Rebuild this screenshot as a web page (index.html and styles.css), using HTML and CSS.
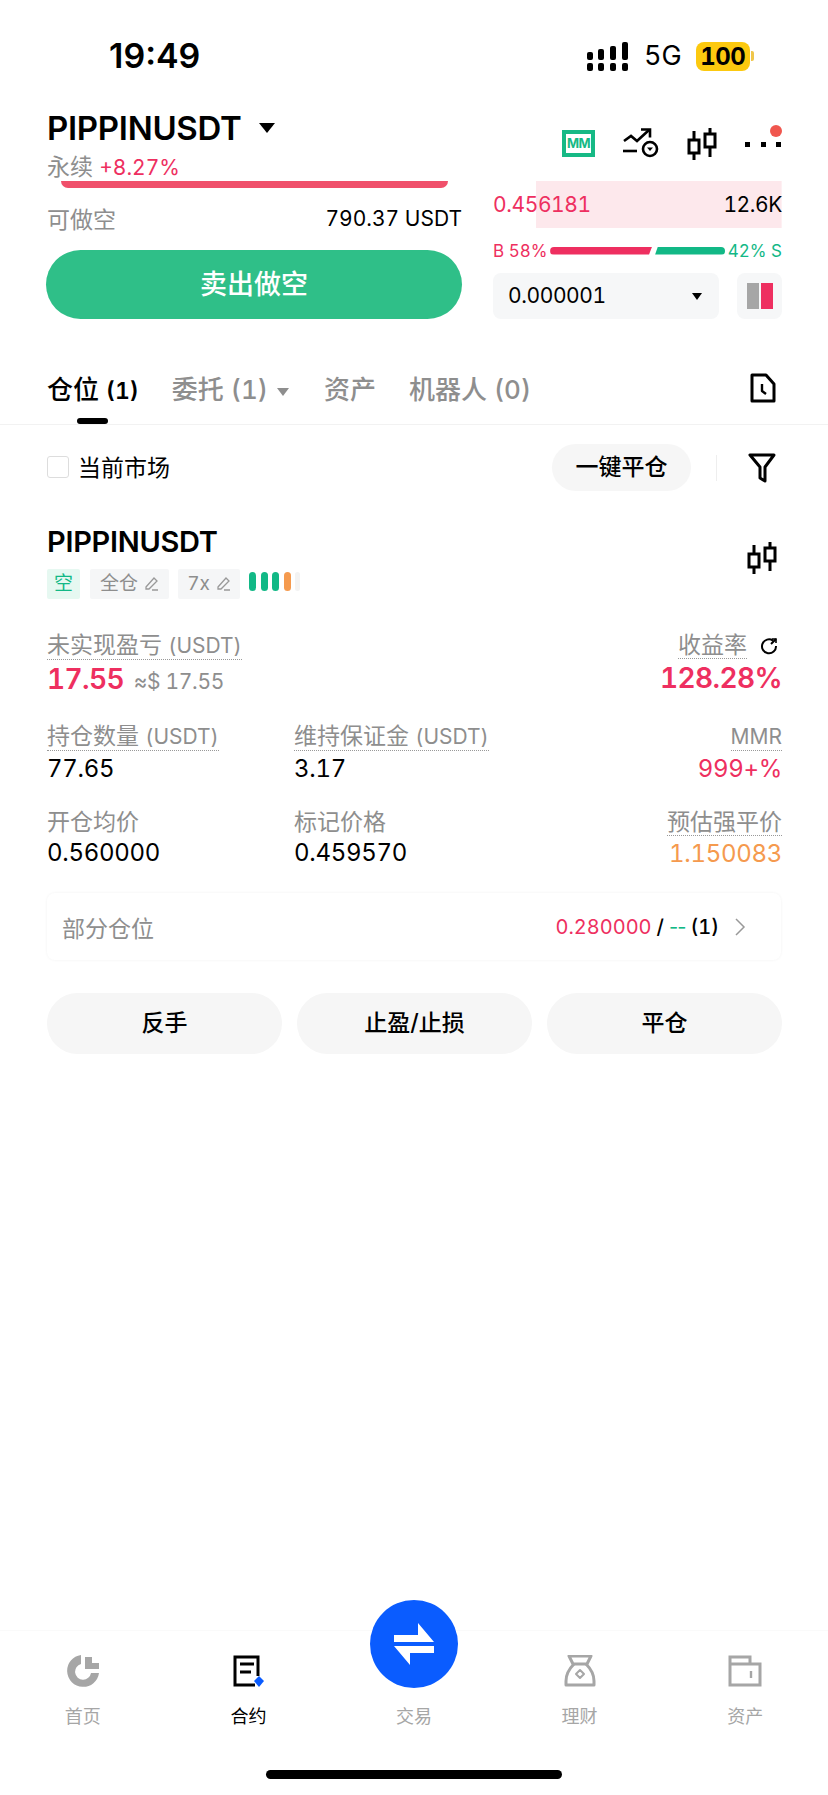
FILE: index.html
```html
<!DOCTYPE html>
<html lang="zh-CN">
<head>
    <meta charset="UTF-8">
    <meta name="viewport" content="width=device-width, initial-scale=1.0">
    <title>PIPPINUSDT 合约</title>
    <link rel="stylesheet" href="styles.css">
</head>
<body>
    <div class="page">
        <!-- Barra de estado -->
        <div class="status-bar">
            <span class="time">19:49</span>
            <div class="status-right">
                <svg class="signal" width="42" height="29" viewBox="0 0 42 29" fill="#000">
                    <rect x="0" y="10" width="6" height="8" rx="2"/><rect x="0" y="21" width="6" height="8" rx="2"/>
                    <rect x="11" y="7" width="6" height="11" rx="2"/><rect x="11" y="21" width="6" height="8" rx="2"/>
                    <rect x="23" y="4" width="6" height="14" rx="2"/><rect x="23" y="21" width="6" height="8" rx="2"/>
                    <rect x="35" y="0" width="6" height="18" rx="2"/><rect x="35" y="21" width="6" height="8" rx="2"/>
                </svg>
                <span class="net">5G</span>
                <span class="battery">100</span>
                <span class="battery-tip"></span>
            </div>
        </div>

        <!-- Cabecera del mercado -->
        <div class="market-head">
            <div>
                <div class="symbol">PIPPINUSDT <span class="caret"></span></div>
                <div class="symbol-sub">永续 <span class="red">+8.27%</span></div>
            </div>
            <div class="head-icons">
                <span class="mm-icon">MM</span>
                <svg width="36" height="30" viewBox="0 0 36 30" fill="none" stroke="#000" stroke-width="2.6">
                    <path d="M1 13l7-5 6 5L26 2"/><path d="M18 1.500h9v8"/><path d="M0 23h14"/>
                    <circle cx="27" cy="21" r="7"/><path d="M24 19.500h6L27 23z" fill="#000" stroke="none"/>
                </svg>
                <svg class="candle" width="30" height="32" viewBox="0 0 30 32" fill="none" stroke="#000" stroke-width="3">
                    <rect x="2" y="12" width="10" height="13"/><path d="M7 3v9M7 25v7"/>
                    <rect x="18" y="6" width="10" height="13"/><path d="M23 0v6M23 19v10"/>
                </svg>
                <div class="more">
                    <span></span><span></span><span></span>
                    <i class="more-dot"></i>
                </div>
            </div>
        </div>

        <!-- Orden y libro -->
        <div class="order-row">
            <div class="order-left">
                <div class="red-strip"></div>
                <div class="avail">
                    <span class="grey avail-label">可做空</span>
                    <span>790.37 USDT</span>
                </div>
                <div class="sell-btn">卖出做空</div>
            </div>
            <div class="order-right">
                <div class="book-row">
                    <span class="red">0.456181</span>
                    <span>12.6K</span>
                </div>
                <div class="ratio">
                    <span class="red">B 58%</span>
                    <div class="ratio-bar">
                        <div class="ratio-buy"></div>
                        <div class="ratio-sell"></div>
                    </div>
                    <span class="green">42% S</span>
                </div>
                <div class="book-tools">
                    <div class="tick-select">0.000001 <span class="caret small"></span></div>
                    <div class="layout-btn"><span class="lay-grey"></span><span class="lay-red"></span></div>
                </div>
            </div>
        </div>

        <!-- Pestañas -->
        <div class="tabs">
            <div class="tab active">仓位 <b>(1)</b><i class="tab-line"></i></div>
            <div class="tab tab-orders">委托 (1) <span class="caret tiny"></span></div>
            <div class="tab tab-assets">资产</div>
            <div class="tab tab-bots">机器人 (0)</div>
            <svg class="tab-file" width="26" height="30" viewBox="0 0 26 30" fill="none" stroke="#000" stroke-width="3" stroke-linejoin="round">
                <path d="M2 2h14l8 9v17H2z"/><path d="M12 11v7l4 3" stroke-width="2.4"/>
            </svg>
        </div>

        <div class="filter-row">
            <span class="checkbox"></span>
            <span class="filter-label">当前市场</span>
            <span class="close-all">一键平仓</span>
            <span class="filter-sep"></span>
            <svg width="28" height="30" viewBox="0 0 28 30" fill="none" stroke="#000" stroke-width="3" stroke-linejoin="round">
                <path d="M2 2h24L17 14v14l-5-3V14z"/>
            </svg>
        </div>

        <!-- Posición -->
        <div class="position">
            <div class="pos-head">
                <div>
                    <div class="pos-symbol">PIPPINUSDT</div>
                    <div class="pos-tags">
                        <span class="tag tag-short">空</span>
                        <span class="tag tag-mid">全仓
                            <svg width="16" height="16" viewBox="0 0 16 16" fill="none" stroke="#999" stroke-width="1.3"><path d="M3 11L11 2l3 3-8 8H3zM9 14h6"/></svg>
                        </span>
                        <span class="tag tag-lev">7x
                            <svg width="16" height="16" viewBox="0 0 16 16" fill="none" stroke="#999" stroke-width="1.3"><path d="M3 11L11 2l3 3-8 8H3zM9 14h6"/></svg>
                        </span>
                        <span class="risk"><i></i><i></i><i></i><i class="risk-o"></i><i class="risk-off"></i></span>
                    </div>
                </div>
                <svg class="candle" width="30" height="32" viewBox="0 0 30 32" fill="none" stroke="#000" stroke-width="3">
                    <rect x="2" y="12" width="10" height="13"/><path d="M7 3v9M7 25v7"/>
                    <rect x="18" y="6" width="10" height="13"/><path d="M23 0v6M23 19v10"/>
                </svg>
            </div>

            <div class="pnl-row">
                <div>
                    <span class="label dotted">未实现盈亏 <small>(USDT)</small></span>
                    <div class="pnl-val"><b class="red pnl-main">17.55</b> <span class="approx">≈$ 17.55</span></div>
                </div>
                <div class="right">
                    <span class="label-wrap">
                        <span class="label dotted">收益率</span>
                        <svg width="18" height="18" viewBox="0 0 18 18" fill="none" stroke="#000" stroke-width="2"><path d="M13 3.600A7 7 0 1 0 16 9"/><path d="M11 7l5-5"/><path d="M12 2h4v4" stroke-width="1.6"/></svg>
                    </span>
                    <div class="pnl-val"><b class="red">128.28%</b></div>
                </div>
            </div>

            <div class="data-grid">
                <div>
                    <span class="label dotted">持仓数量 <small>(USDT)</small></span>
                    <div class="val">77.65</div>
                </div>
                <div>
                    <span class="label dotted">维持保证金 <small>(USDT)</small></span>
                    <div class="val">3.17</div>
                </div>
                <div class="right">
                    <span class="label dotted"><small>MMR</small></span>
                    <div class="val red">999+%</div>
                </div>
                <div>
                    <span class="label">开仓均价</span>
                    <div class="val">0.560000</div>
                </div>
                <div>
                    <span class="label">标记价格</span>
                    <div class="val">0.459570</div>
                </div>
                <div class="right">
                    <span class="label dotted">预估强平价</span>
                    <div class="val orange">1.150083</div>
                </div>
            </div>

            <div class="partial">
                <span class="grey">部分仓位</span>
                <span class="partial-right">
                    <span class="red">0.280000</span> <b>/</b> <span class="green dash">--</span> <b>(1)</b>
                    <svg width="12" height="20" viewBox="0 0 12 20" fill="none" stroke="#999" stroke-width="1.5"><path d="M2 2l8 8-8 8"/></svg>
                </span>
            </div>

            <div class="pos-actions">
                <div class="pos-btn">反手</div>
                <div class="pos-btn">止盈/止损</div>
                <div class="pos-btn">平仓</div>
            </div>
        </div>

        <!-- Navegación inferior -->
        <div class="bottom-nav">
            <div class="trade-fab">
                <svg width="44" height="44" viewBox="0 0 44 44" fill="#fff">
                    <path d="M26 1l16 19H2v-7h24z"/><path d="M18 43L2 24h40v7H18z"/>
                </svg>
            </div>
            <div class="nav-item">
                <svg width="34" height="32" viewBox="0 0 34 32" fill="#a6a6a6">
                    <path d="M15 0v9a8 8 0 1 0 10 9h8A16 16 0 1 1 15 0z"/><path d="M19 2h7v6h7v6H19z"/>
                </svg>
                <span>首页</span>
            </div>
            <div class="nav-item nav-on">
                <svg width="34" height="32" viewBox="0 0 34 32" fill="none">
                    <path d="M27 21V2H4v28h20" stroke="#000" stroke-width="3"/>
                    <path d="M9 9h14M9 17h11" stroke="#000" stroke-width="3"/>
                    <path d="M28 21l5 5-5 6-5-6z" fill="#0a5cff"/>
                </svg>
                <span>合约</span>
            </div>
            <div class="nav-item">
                <div class="nav-spacer"></div>
                <span>交易</span>
            </div>
            <div class="nav-item">
                <svg width="34" height="32" viewBox="0 0 34 32" fill="none" stroke="#a6a6a6" stroke-width="3" stroke-linejoin="round">
                    <path d="M6 1h22l-4 8H10z"/><path d="M11 9C6 14 3 19 3 26v4h28v-4c0-7-3-12-8-17"/>
                    <path d="M17 15l4 4-4 4-4-4z" stroke-width="2"/>
                </svg>
                <span>理财</span>
            </div>
            <div class="nav-item">
                <svg width="34" height="32" viewBox="0 0 34 32" fill="none" stroke="#a6a6a6" stroke-width="3">
                    <path d="M2 30V2h20v7h10v21zM2 9h20"/><path d="M23 16v7" stroke-width="2.4"/>
                </svg>
                <span>资产</span>
            </div>
        </div>

        <div class="home-bar"></div>
    </div>
</body>
</html>
```

FILE: styles.css
```css
* {
    box-sizing: border-box;
}

body {
    margin: 0;
    padding: 0;
    background-color: #fff;
    font-family: Inter, "Noto Sans CJK SC", sans-serif;
    font-variant-numeric: tabular-nums;
    color: #000;
}

.page {
    width: 828px;
    height: 1795px;
    display: flex;
    flex-direction: column;
    overflow: hidden;
}

.red { color: #ee2f60; }
.green { color: #12b886; }
.grey { color: #8e8e8e; }
.orange { color: #f59a4e; }

.caret {
    display: inline-block;
    width: 0;
    height: 0;
    border-left: 8px solid transparent;
    border-right: 8px solid transparent;
    border-top: 10px solid #000;
}

.caret.small {
    border-left-width: 5px;
    border-right-width: 5px;
    border-top-width: 7px;
}

.caret.tiny {
    border-left-width: 6px;
    border-right-width: 6px;
    border-top-width: 8px;
    border-top-color: #8e8e8e;
    margin: 0 0 3px 2px;
}

/* status bar */
.status-bar {
    height: 108px;
    padding: 36px 0 0 109px;
    display: flex;
    justify-content: space-between;
    align-items: flex-start;
}

.time {
    font-size: 34px;
    font-weight: 600;
    line-height: 40px;
    font-variant-numeric: normal;
}

.status-right {
    display: flex;
    align-items: center;
    width: 170px;
    margin-right: 71px;
    height: 40px;
}

.signal {
    margin-right: 15px;
}

.net {
    font-size: 27px;
    line-height: 30px;
    margin-right: 14px;
}

.battery {
    background-color: #fcc90f;
    border-radius: 8px;
    font-size: 24px;
    font-weight: 700;
    line-height: 29px;
    padding: 0 4px;
    width: 54px;
    text-align: center;
    letter-spacing: -0.5px;
}

.battery-tip {
    width: 3px;
    height: 10px;
    background-color: #f0c64a;
    border-radius: 0 2px 2px 0;
    margin-left: 1px;
}

/* market head */
.market-head {
    height: 73px;
    padding: 0 47px;
    display: flex;
    justify-content: space-between;
}

.symbol {
    font-size: 33px;
    font-weight: 600;
    line-height: 40px;
    letter-spacing: -0.3px;
}

.symbol .caret {
    margin: 0 0 7px 9px;
}

.symbol-sub {
    font-size: 23px;
    line-height: 30px;
    color: #8e8e8e;
    margin-top: 4px;
}

.symbol-sub .red {
    font-size: 21px;
}

.head-icons {
    display: flex;
    align-items: flex-start;
    gap: 28px;
    padding-top: 20px;
}

.mm-icon {
    width: 33px;
    height: 27px;
    border: 4px solid #16b985;
    color: #16b985;
    font-size: 13px;
    font-weight: 700;
    line-height: 19px;
    text-align: center;
    margin-top: 2px;
    letter-spacing: -0.5px;
}

.more {
    position: relative;
    width: 36px;
    display: flex;
    justify-content: space-between;
    padding-top: 14px;
}

.more span {
    width: 5px;
    height: 5px;
    background-color: #000;
}

.more-dot {
    position: absolute;
    right: -1px;
    top: -3px;
    width: 12px;
    height: 12px;
    border-radius: 50%;
    background-color: #f0564e;
}

/* order row */
.order-row {
    height: 138px;
    padding: 0 46px 0 47px;
    display: flex;
    justify-content: space-between;
}

.order-left {
    width: 415px;
}

.red-strip {
    width: 387px;
    height: 7px;
    margin-left: 14px;
    background-color: #f0506b;
    border-radius: 0 0 14px 14px;
}

.avail {
    display: flex;
    justify-content: space-between;
    align-items: center;
    height: 60px;
    font-size: 21px;
}

.avail-label {
    font-size: 23px;
}

.sell-btn {
    height: 69px;
    margin-top: 2px;
    margin-left: -1px;
    border-radius: 35px;
    background-color: #2fbf88;
    color: #fff;
    font-size: 27px;
    font-weight: 500;
    line-height: 69px;
    text-align: center;
}

.order-right {
    width: 289px;
}

.book-row {
    height: 47px;
    display: flex;
    justify-content: space-between;
    align-items: center;
    font-size: 21px;
    letter-spacing: -0.4px;
    background: linear-gradient(#fde8ec, #fde8ec) no-repeat right / 85% 100%;
}

.ratio {
    display: flex;
    align-items: center;
    justify-content: space-between;
    height: 45px;
    font-size: 17px;
}

.ratio-bar {
    display: flex;
    width: 175px;
    gap: 3px;
}

.ratio-buy {
    width: 102px;
    height: 8px;
    background-color: #ee2f60;
    border-radius: 4px 0 0 4px;
    clip-path: polygon(0 0, 100% 0, 97% 100%, 0 100%);
}

.ratio-sell {
    width: 70px;
    height: 8px;
    background-color: #12b886;
    border-radius: 0 4px 4px 0;
    clip-path: polygon(4% 0, 100% 0, 100% 100%, 0 100%);
}

.book-tools {
    display: flex;
    justify-content: space-between;
}

.tick-select {
    width: 226px;
    height: 46px;
    border-radius: 8px;
    background-color: #f6f7f8;
    font-size: 21px;
    line-height: 46px;
    padding: 0 17px 0 15px;
    display: flex;
    justify-content: space-between;
    align-items: center;
    letter-spacing: -0.4px;
}

.layout-btn {
    width: 45px;
    height: 46px;
    border-radius: 8px;
    background-color: #f6f7f8;
    display: flex;
    justify-content: center;
    align-items: center;
    gap: 2px;
}

.lay-grey, .lay-red {
    width: 12px;
    height: 26px;
}

.lay-grey { background-color: #a6a6a6; }
.lay-red { background-color: #ee2f60; }

/* tabs */
.tabs {
    position: relative;
    height: 106px;
    padding: 0 47px;
    border-bottom: 1px solid #f2f2f2;
    display: flex;
    align-items: flex-end;
}

.tab {
    position: relative;
    font-size: 26px;
    line-height: 36px;
    height: 52px;
    color: #8e8e8e;
    font-weight: 500;
    white-space: nowrap;
}

.tab.active {
    color: #000;
}

.tab.active b {
    font-size: 23px;
    font-weight: 600;
}

.tab-line {
    position: absolute;
    left: 30px;
    bottom: 0;
    width: 31px;
    height: 6px;
    border-radius: 3px;
    background-color: #000;
}

.tab-orders { margin-left: 33px; }
.tab-assets { margin-left: 35px; }
.tab-bots { margin-left: 33px; }

.tab-file {
    margin-left: auto;
    margin-bottom: 21px;
    margin-right: 5px;
}

/* filter row */
.filter-row {
    height: 85px;
    padding: 0 52px 0 47px;
    display: flex;
    align-items: center;
}

.checkbox {
    width: 22px;
    height: 22px;
    border: 1.5px solid #ddd;
    border-radius: 3px;
    margin-top: -2px;
}

.filter-label {
    font-size: 23px;
    margin: -4px 0 0 9px;
}

.close-all {
    margin-left: auto;
    width: 139px;
    height: 47px;
    border-radius: 24px;
    background-color: #f6f6f6;
    font-size: 23px;
    font-weight: 500;
    line-height: 47px;
    text-align: center;
}

.filter-sep {
    width: 1px;
    height: 26px;
    background-color: #eee;
    margin: 0 31px 0 25px;
}

/* position */
.position {
    padding: 0 46px 0 47px;
}

.pos-head {
    display: flex;
    justify-content: space-between;
    align-items: center;
    padding-right: 5px;
    height: 90px;
    margin-top: 6px;
}

.pos-head .candle {
    margin-bottom: 6px;
}

.pos-symbol {
    font-size: 29px;
    font-weight: 600;
    line-height: 36px;
    letter-spacing: -0.3px;
}

.pos-tags {
    display: flex;
    align-items: center;
    margin-top: 9px;
    height: 30px;
}

.tag {
    height: 30px;
    font-size: 19px;
    line-height: 30px;
    display: inline-flex;
    align-items: center;
    justify-content: center;
    gap: 5px;
    border-radius: 2px;
    background-color: #f5f6f7;
    color: #8e8e8e;
}

.tag-short {
    width: 33px;
    background-color: #e6f8f1;
    color: #12b886;
    margin-right: 10px;
}

.tag-mid {
    width: 79px;
    margin-right: 9px;
}

.tag-lev {
    width: 62px;
    margin-right: 9px;
}

.risk {
    display: flex;
    gap: 4.5px;
    margin-bottom: 4px;
}

.risk i {
    width: 7px;
    height: 19px;
    border-radius: 4px;
    background-color: #12b886;
}

.risk i.risk-o { background-color: #f59a4e; }
.risk i.risk-off { background-color: #f3f3f3; width: 5px; }

.label {
    font-size: 23px;
    line-height: 26px;
    color: #8e8e8e;
    display: inline-block;
}

.label small {
    font-size: 21px;
}

.label.dotted {
    border-bottom: 1.5px dotted #999;
}

.right {
    text-align: right;
}

.label-wrap {
    display: inline-flex;
    align-items: center;
    gap: 13px;
    padding-right: 4px;
}

.pnl-row {
    display: flex;
    justify-content: space-between;
    margin-top: 26px;
    height: 91px;
}

.pnl-val {
    font-size: 21px;
    line-height: 36px;
    margin-top: 1px;
}

.pnl-val b {
    font-size: 28px;
    font-weight: 600;
    letter-spacing: -0.6px;
}

.approx {
    color: #8e8e8e;
    margin-left: 4px;
    letter-spacing: -0.3px;
}

.data-grid {
    display: grid;
    grid-template-columns: 247px 1fr auto;
    row-gap: 25px;
}

.val {
    font-size: 24px;
    line-height: 30px;
    margin-top: 3px;
    letter-spacing: -0.3px;
}

.partial {
    margin-top: 24px;
    margin-right: 1px;
    height: 67px;
    border-radius: 8px;
    box-shadow: 0 0 3px rgba(0, 0, 0, 0.06);
    padding: 0 35px 0 15px;
    display: flex;
    justify-content: space-between;
    align-items: center;
    font-size: 23px;
}

.partial-right {
    display: flex;
    align-items: center;
    gap: 5px;
    font-size: 20px;
}

.partial-right .dash {
    font-variant-numeric: normal;
    letter-spacing: -1px;
}

.partial-right svg {
    margin-left: 10px;
}

.partial-right b {
    font-weight: 500;
}

.pos-actions {
    margin-top: 33px;
    display: flex;
    justify-content: space-between;
}

.pos-btn {
    width: 235px;
    height: 61px;
    border-radius: 31px;
    background-color: #f6f6f6;
    font-size: 23px;
    font-weight: 500;
    line-height: 61px;
    text-align: center;
}

/* bottom nav */
.bottom-nav {
    position: relative;
    margin-top: auto;
    height: 140px;
    padding: 24px 0 0;
    border-top: 1px solid #fafafa;
    display: grid;
    grid-template-columns: repeat(5, 165.6px);
}

.trade-fab {
    position: absolute;
    left: 370px;
    top: -31px;
    width: 88px;
    height: 88px;
    border-radius: 50%;
    background-color: #0a5cff;
    display: flex;
    align-items: center;
    justify-content: center;
}

.nav-item {
    display: flex;
    flex-direction: column;
    align-items: center;
    font-size: 18px;
    line-height: 24px;
    color: #a6a6a6;
    gap: 18px;
}

.nav-on {
    color: #000;
}

.nav-spacer {
    height: 32px;
}

.home-bar {
    width: 296px;
    height: 9px;
    margin: 0 auto 16px;
    border-radius: 5px;
    background-color: #000;
}
```
